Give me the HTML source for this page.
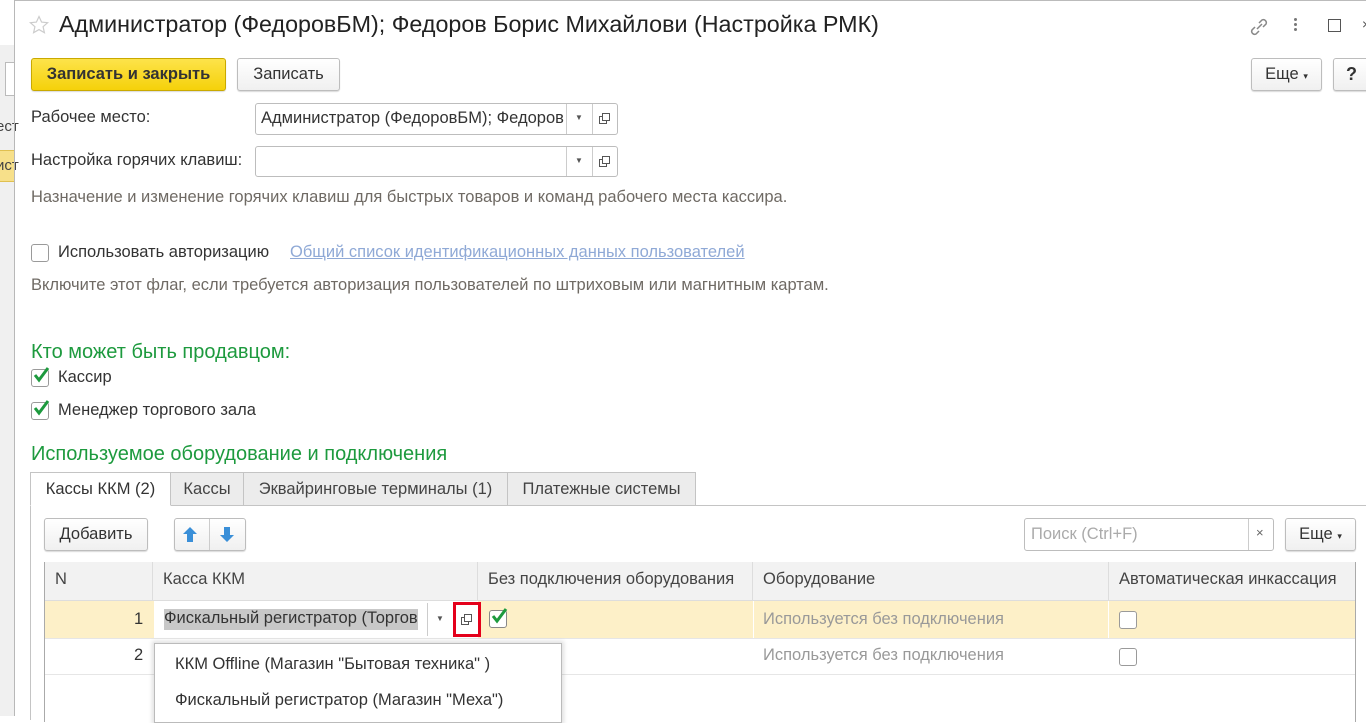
<!DOCTYPE html>
<html><head><meta charset="utf-8"><style>
*{box-sizing:border-box;margin:0;padding:0}
body{width:1366px;height:716px;overflow:hidden;background:#fff;font-family:"Liberation Sans",Arial,sans-serif;font-size:16.5px;color:#333;position:relative}
.a{position:absolute;white-space:nowrap}
.btn{position:absolute;border:1px solid #bdbdbd;border-radius:3px;background:linear-gradient(#fff,#f0f0f0);box-shadow:0 1px 1px rgba(0,0,0,.15);text-align:center;color:#333}
.fld{position:absolute;border:1px solid #bdbdbd;border-radius:3px;background:#fff}
.hint{color:#6f6a64}
.cb{position:absolute;width:18px;height:18px;border:1px solid #9a9a9a;border-radius:3px;background:#fff}
.green{color:#1d9a3e}
.tab{position:absolute;top:472px;height:34px;border:1px solid #c4c4c4;background:#ececec;padding-top:7px;text-align:center;color:#444}
.th{position:absolute;top:562px;height:38px;background:#f2f2f2;border-right:1px solid #ddd;padding:8px 10px;color:#444}
.ck{position:absolute}
</style></head><body>
<div class="a" style="left:0;top:0;width:14px;height:716px;background:#f0f0f0"></div>
<div class="a" style="left:0;top:0;width:14px;height:45px;background:#fff"></div>
<div class="a" style="left:5px;top:62px;width:10px;height:34px;border:1px solid #bbb;border-right:none;background:#fff"></div>
<div class="a" style="left:-4px;top:118px;font-size:15px;color:#444">ест</div>
<div class="a" style="left:0;top:150px;width:14px;height:32px;background:#f7e08a;border-top:1px solid #e0c050;border-bottom:1px solid #e0c050"></div>
<div class="a" style="left:-4px;top:157px;font-size:15px;color:#444">ист</div>
<div class="a" style="left:14px;top:0;width:1px;height:716px;background:#b8b8b8"></div>
<div class="a" style="left:15px;top:0;width:1351px;height:1px;background:#bbb"></div>
<svg class="a" style="left:29px;top:15px" width="20" height="20" viewBox="0 0 20 20" fill="none" stroke="#ccc" stroke-width="1.2"><path d="M10 1.5l2.6 5.6 6 .6-4.5 4 1.3 6-5.4-3.1-5.4 3.1 1.3-6-4.5-4 6-.6z"/></svg>
<div class="a" style="left:59px;top:11px;font-size:23.3px;color:#222">Администратор (ФедоровБМ); Федоров Борис Михайлови (Настройка РМК)</div>
<svg class="a" style="left:1248px;top:16px" width="22" height="22" viewBox="0 0 22 22" fill="none" stroke="#888" stroke-width="1.5"><path d="M9 13l5-5M7 11l-3 3a3 3 0 004 4l3-3M15 11l3-3a3 3 0 00-4-4l-3 3"/></svg>
<div class="a" style="left:1294px;top:18px;width:3px;height:3px;background:#777;border-radius:2px;box-shadow:0 5px 0 #777,0 10px 0 #777"></div>
<div class="a" style="left:1328px;top:19px;width:13px;height:13px;border:1.5px solid #555"></div>
<div class="a" style="left:1362px;top:16px;font-size:14px;color:#555">×</div>
<div class="btn" style="left:31px;top:58px;width:195px;height:33px;background:linear-gradient(#fde34a,#f5d10a);border-color:#c9a900;font-weight:bold;color:#333;padding-top:6px">Записать и закрыть</div>
<div class="btn" style="left:237px;top:58px;width:103px;height:33px;padding-top:6px">Записать</div>
<div class="btn" style="left:1251px;top:58px;width:71px;height:33px;padding-top:6px">Еще <span style="font-size:9px">▾</span></div>
<div class="btn" style="left:1333px;top:58px;width:40px;height:33px;padding-top:5px;font-weight:bold;font-size:18px;text-align:left;padding-left:12px">?</div>
<div class="a" style="left:31px;top:108px">Рабочее место:</div>
<div class="fld" style="left:255px;top:103px;width:363px;height:32px"></div>
<div class="a" style="left:261px;top:109px;width:305px;overflow:hidden">Администратор (ФедоровБМ); Федоров Борис</div>
<div class="a" style="left:566px;top:104px;width:1px;height:30px;background:#ccc"></div>
<div class="a" style="left:592px;top:104px;width:1px;height:30px;background:#ccc"></div>
<div class="a" style="left:575px;top:113px;font-size:8px;color:#555">▼</div>
<div class="a" style="left:599px;top:116px;width:8px;height:8px;border:1px solid #555;background:#fff"></div><div class="a" style="left:602px;top:113px;width:8px;height:8px;border:1px solid #555;background:#fff"></div>
<div class="a" style="left:31px;top:151px">Настройка горячих клавиш:</div>
<div class="fld" style="left:255px;top:146px;width:363px;height:31px"></div>
<div class="a" style="left:566px;top:147px;width:1px;height:29px;background:#ccc"></div>
<div class="a" style="left:592px;top:147px;width:1px;height:29px;background:#ccc"></div>
<div class="a" style="left:575px;top:156px;font-size:8px;color:#555">▼</div>
<div class="a" style="left:599px;top:159px;width:8px;height:8px;border:1px solid #555;background:#fff"></div><div class="a" style="left:602px;top:156px;width:8px;height:8px;border:1px solid #555;background:#fff"></div>
<div class="a hint" style="left:31px;top:188px">Назначение и изменение горячих клавиш для быстрых товаров и команд рабочего места кассира.</div>
<div class="cb" style="left:31px;top:244px"></div>
<div class="a" style="left:58px;top:243px">Использовать авторизацию</div>
<div class="a" style="left:290px;top:243px;color:#8fa9d6;text-decoration:underline">Общий список идентификационных данных пользователей</div>
<div class="a hint" style="left:31px;top:276px">Включите этот флаг, если требуется авторизация пользователей по штриховым или магнитным картам.</div>
<div class="a green" style="left:31px;top:341px;font-size:20px">Кто может быть продавцом:</div>
<div class="cb" style="left:31px;top:369px"></div><svg class="ck" style="left:32px;top:365px" width="20" height="20" viewBox="0 0 20 20"><path d="M3 10l4 5 9-12" fill="none" stroke="#1d9a3e" stroke-width="3"/></svg>
<div class="a" style="left:58px;top:368px">Кассир</div>
<div class="cb" style="left:31px;top:402px"></div><svg class="ck" style="left:32px;top:398px" width="20" height="20" viewBox="0 0 20 20"><path d="M3 10l4 5 9-12" fill="none" stroke="#1d9a3e" stroke-width="3"/></svg>
<div class="a" style="left:58px;top:401px">Менеджер торгового зала</div>
<div class="a green" style="left:31px;top:443px;font-size:20px">Используемое оборудование и подключения</div>
<div class="a" style="left:30px;top:505px;width:1340px;height:215px;border:1px solid #c4c4c4;border-right:none;border-bottom:none"></div>
<div class="tab" style="left:170px;width:74px">Кассы</div>
<div class="tab" style="left:243px;width:265px">Эквайринговые терминалы (1)</div>
<div class="tab" style="left:507px;width:189px">Платежные системы</div>
<div class="tab" style="left:30px;width:141px;background:#fff;border-bottom-color:#fff;color:#333">Кассы ККМ (2)</div>
<div class="btn" style="left:44px;top:518px;width:104px;height:33px;padding-top:6px">Добавить</div>
<div class="btn" style="left:174px;top:518px;width:72px;height:33px"></div>
<div class="a" style="left:209px;top:519px;width:1px;height:31px;background:#ccc"></div>
<svg class="a" style="left:182px;top:526px" width="16" height="17" viewBox="0 0 16 17"><path d="M8 1L1 8h4v8h6V8h4z" fill="#3a8fd8"/></svg>
<svg class="a" style="left:219px;top:526px" width="16" height="17" viewBox="0 0 16 17"><path d="M8 16L1 9h4V1h6v8h4z" fill="#3a8fd8"/></svg>
<div class="fld" style="left:1024px;top:518px;width:250px;height:33px"></div>
<div class="a" style="left:1031px;top:525px;color:#aaa">Поиск (Ctrl+F)</div>
<div class="a" style="left:1248px;top:519px;width:1px;height:31px;background:#ccc"></div>
<div class="a" style="left:1256px;top:525px;color:#666;font-size:13px">×</div>
<div class="btn" style="left:1285px;top:518px;width:71px;height:33px;padding-top:6px">Еще <span style="font-size:9px">▾</span></div>
<div class="a" style="left:44px;top:562px;width:1312px;height:160px;border:1px solid #aaa;border-bottom:none"></div>
<div class="th" style="left:45px;width:108px">N</div>
<div class="th" style="left:153px;width:325px">Касса ККМ</div>
<div class="th" style="left:478px;width:275px">Без подключения оборудования</div>
<div class="th" style="left:753px;width:356px">Оборудование</div>
<div class="th" style="left:1109px;width:246px;border-right:none">Автоматическая инкассация</div>
<div class="a" style="left:45px;top:600px;width:1310px;height:1px;background:#ddd"></div>
<div class="a" style="left:45px;top:601px;width:1310px;height:37px;background:#fdf0c8"></div>
<div class="a" style="left:753px;top:601px;width:1px;height:37px;background:#fff"></div>
<div class="a" style="left:1108px;top:601px;width:1px;height:37px;background:#fff"></div>
<div class="a" style="left:45px;top:638px;width:1310px;height:1px;background:#e6e6e6"></div>
<div class="a" style="left:45px;top:674px;width:1310px;height:1px;background:#e6e6e6"></div>
<div class="a" style="left:134px;top:610px">1</div>
<div class="a" style="left:154px;top:601px;width:324px;height:37px;background:#fff"></div>
<div class="a" style="left:164px;top:609px;width:254px;height:21px;background:#c8c8c8;overflow:hidden">Фискальный регистратор (Торговый зал)</div>
<div class="a" style="left:427px;top:603px;width:1px;height:33px;background:#ccc"></div>
<div class="a" style="left:436px;top:614px;font-size:8px;color:#555">▼</div>
<div class="a" style="left:453px;top:602px;width:28px;height:35px;border:3px solid #e4001b"></div>
<div class="a" style="left:461px;top:617px;width:8px;height:8px;border:1px solid #555;background:#fff"></div><div class="a" style="left:464px;top:614px;width:8px;height:8px;border:1px solid #555;background:#fff"></div>
<div class="cb" style="left:489px;top:610px;border-color:#888"></div><svg class="ck" style="left:490px;top:606px" width="20" height="20" viewBox="0 0 20 20"><path d="M3 10l4 5 9-12" fill="none" stroke="#1d9a3e" stroke-width="3"/></svg>
<div class="a" style="left:763px;top:610px;color:#999">Используется без подключения</div>
<div class="cb" style="left:1119px;top:611px"></div>
<div class="a" style="left:134px;top:646px">2</div>
<div class="a" style="left:763px;top:646px;color:#999">Используется без подключения</div>
<div class="cb" style="left:1119px;top:648px"></div>
<div class="a" style="left:154px;top:643px;width:408px;height:80px;background:#fff;border:1px solid #bbb;box-shadow:0 0 4px 2px rgba(0,0,0,.12)"></div>
<div class="a" style="left:175px;top:655px">ККМ Offline (Магазин "Бытовая техника" )</div>
<div class="a" style="left:175px;top:691px">Фискальный регистратор (Магазин "Меха")</div>
</body></html>
